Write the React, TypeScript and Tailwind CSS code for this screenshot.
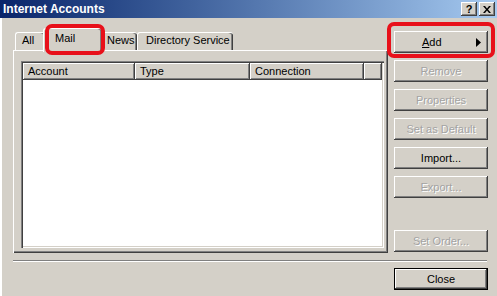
const raised =
  "shadow-[inset_-1px_-1px_#404040,inset_1px_1px_#ffffff,inset_-2px_-2px_#808080,inset_2px_2px_#d4d0c8]";

function Btn({
  label,
  disabled,
  children,
}: {
  label?: string;
  disabled?: boolean;
  children?: React.ReactNode;
}) {
  return (
    <div
      className={`w-[94px] h-[22px] flex items-center justify-center bg-[#d4d0c8] ${raised} ${
        disabled ? "text-[#a3a3a3] [text-shadow:1px_1px_0_#ffffff]" : "text-black"
      }`}
    >
      {children ?? label}
    </div>
  );
}

function Tab({
  label,
  width,
  pad,
  selected,
}: {
  label: string;
  width: string;
  pad: string;
  selected?: boolean;
}) {
  if (selected) {
    return (
      <div
        className={`${width} ${pad} h-[24px] -mx-[2px] -mb-[2px] relative z-10 bg-[#d4d0c8] rounded-t-[3px] border-t border-l border-white shadow-[inset_-1px_0_#404040,inset_-2px_0_#808080] flex pt-[4px]`}
      >
        {label}
      </div>
    );
  }
  return (
    <div
      className={`${width} ${pad} h-[18px] bg-[#d4d0c8] rounded-t-[3px] border-t border-l border-white shadow-[inset_-1px_0_#404040,inset_-2px_0_#808080] flex pt-[2px]`}
    >
      {label}
    </div>
  );
}

function HeaderCell({ label, width }: { label: string; width: string }) {
  return (
    <div
      className={`${width} h-[17px] shrink-0 flex items-center pl-[5px] bg-[#d4d0c8] shadow-[inset_-1px_-1px_#404040,inset_1px_1px_#ffffff,inset_-2px_-2px_#808080]`}
    >
      {label}
    </div>
  );
}

export default function App() {
  return (
    <div className="w-[497px] h-[296px] bg-[#d4d0c8] relative overflow-hidden font-['Liberation_Sans',Arial,sans-serif] text-[11px] leading-none text-black shadow-[inset_2px_0_#ffffff]">
      {/* title bar */}
      <div className="h-[18px] flex items-center justify-between pl-[3px] pr-[2px] bg-gradient-to-r from-[#0a246a] to-[#a6caf0]">
        <span className="text-white font-bold text-[12px]">Internet Accounts</span>
        <div className="flex gap-[2px]">
          <div className={`w-[16px] h-[14px] bg-[#d4d0c8] ${raised} flex items-center justify-center font-bold text-[11px]`}>
            ?
          </div>
          <div className={`w-[16px] h-[14px] bg-[#d4d0c8] ${raised} flex items-center justify-center`}>
            <svg width="8" height="7" viewBox="0 0 8 7">
              <path d="M0 0h2l2 2.5L6 0h2L5 3.5 8 7H6L4 4.5 2 7H0l3-3.5z" fill="#000" />
            </svg>
          </div>
        </div>
      </div>

      {/* body */}
      <div className="flex h-[225px] pl-[13px] mt-[10px]">
        <div className="w-[375px] flex flex-col">
          <div className="h-[22px] flex items-end pl-[2px]">
            <Tab label="All" width="w-[30px]" pad="pl-[6px]" />
            <Tab label="Mail" width="w-[59px]" pad="pl-[11px]" selected />
            <Tab label="News" width="w-[37px]" pad="pl-[6px]" />
            <Tab label="Directory Service" width="w-[96px]" pad="pl-[8px]" />
          </div>
          <div className="h-[203px] pl-[7px] pt-[10px] border-t border-l border-white shadow-[inset_-1px_-1px_#404040,inset_-2px_-2px_#808080]">
            <div className="w-[363px] h-[187px] bg-white p-[2px] shadow-[inset_1px_1px_#808080,inset_2px_2px_#404040,inset_-1px_-1px_#ffffff,inset_-2px_-2px_#d4d0c8]">
              <div className="flex">
                <HeaderCell label="Account" width="w-[112px]" />
                <HeaderCell label="Type" width="w-[115px]" />
                <HeaderCell label="Connection" width="w-[114px]" />
                <HeaderCell label="" width="w-[18px]" />
              </div>
            </div>
          </div>
        </div>

        <div className="ml-[6px] pt-[3px] pb-[1px] flex flex-col gap-[7px]">
          <Btn>
            <div className="w-full flex items-center pl-[28px] pr-[7px]">
              <span>
                <span className="underline">A</span>dd
              </span>
              <svg className="ml-auto" width="5" height="9" viewBox="0 0 5 9">
                <path d="M0 0l5 4.5L0 9z" fill="#000" />
              </svg>
            </div>
          </Btn>
          <Btn label="Remove" disabled />
          <Btn label="Properties" disabled />
          <Btn label="Set as Default" disabled />
          <Btn label="Import..." />
          <Btn label="Export..." disabled />
          <div className="mt-auto">
            <Btn label="Set Order..." disabled />
          </div>
        </div>
      </div>

      {/* separator */}
      <div className="ml-[13px] mt-[7px] w-[474px] h-[2px] border-t border-[#808080] border-b border-b-white" />

      <div className="flex justify-end pr-[9px] mt-[6px]">
        <div className="w-[94px] h-[22px] border border-black">
          <div className={`w-full h-full flex items-center justify-center ${raised}`}>Close</div>
        </div>
      </div>

      {/* red highlight marks */}
      <div className="absolute left-[45px] top-[24px] w-[60px] h-[31px] border-[4px] border-[#e8101a] rounded-[7px] z-20" />
      <div className="absolute left-[387px] top-[22px] w-[108px] h-[36px] border-[4px] border-[#e8101a] rounded-[7px] z-20" />
    </div>
  );
}
